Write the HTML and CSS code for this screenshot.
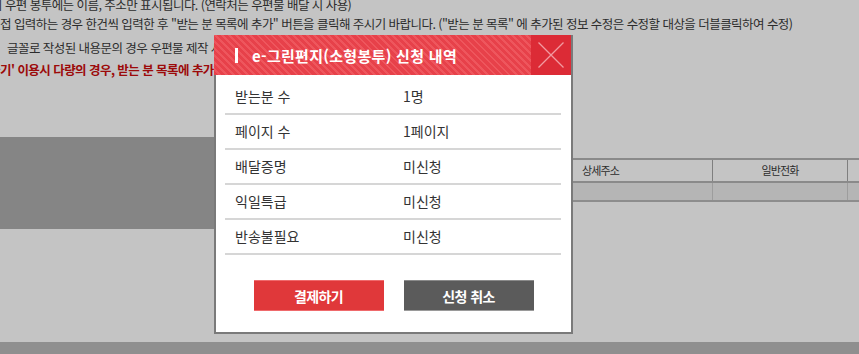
FILE: index.html
```html
<!DOCTYPE html>
<html lang="ko">
<head>
<meta charset="utf-8">
<title>e-그린편지 신청 내역</title>
<link rel="stylesheet" href="styles.css">
</head>
<body class="page">
  <div class="notes">
    <p class="note note-1">의 우편 봉투에는 이름, 주소만 표시됩니다. (연락처는 우편물 배달 시 사용)</p>
    <p class="note note-2">접 입력하는 경우 한건씩 입력한 후 "받는 분 목록에 추가" 버튼을 클릭해 주시기 바랍니다. ("받는 분 목록" 에 추가된 정보 수정은 수정할 대상을 더블클릭하여 수정)</p>
    <p class="note note-3">글꼴로 작성된 내용문의 경우 우편물 제작 시 글꼴이 변경될 수 있습니다.</p>
    <p class="note note-4">하기' 이용시 다량의 경우, 받는 분 목록에 추가하지 마시고 엑셀 파일로 업로드해 주시기 바랍니다.</p>
  </div>

  <div class="work-area">
    <div class="dark-block"></div>
    <div class="list-table">
      <div class="list-row list-head">
        <div class="col col-a"></div>
        <div class="col col-b">상세주소</div>
        <div class="col col-c">일반전화</div>
        <div class="col col-d"></div>
      </div>
      <div class="list-row list-data">
        <div class="col col-a"></div>
        <div class="col col-b"></div>
        <div class="col col-c"></div>
        <div class="col col-d"></div>
      </div>
    </div>
  </div>

  <div class="footer-band"></div>

  <div class="modal">
    <div class="modal-head">
      <span class="title-bar"></span>
      <h1 class="modal-title">e-그린편지(소형봉투) 신청 내역</h1>
      <button class="close-btn" aria-label="닫기">
        <svg width="40" height="40" viewBox="0 0 40 40">
          <path d="M7.5 7.5 L32.5 32.5 M32.5 7.5 L7.5 32.5" stroke="#f29aa0" stroke-width="1.3" fill="none"/>
        </svg>
      </button>
    </div>
    <div class="modal-body">
      <div class="info-table">
        <div class="info-row"><div class="cell">받는분 수</div><div class="cell">1명</div></div>
        <div class="info-row"><div class="cell">페이지 수</div><div class="cell">1페이지</div></div>
        <div class="info-row"><div class="cell">배달증명</div><div class="cell">미신청</div></div>
        <div class="info-row"><div class="cell">익일특급</div><div class="cell">미신청</div></div>
        <div class="info-row"><div class="cell">반송불필요</div><div class="cell">미신청</div></div>
      </div>
      <div class="actions">
        <button class="btn btn-pay">결제하기</button>
        <button class="btn btn-cancel">신청 취소</button>
      </div>
    </div>
  </div>
</body>
</html>
```

FILE: styles.css
```css
* { box-sizing: border-box; }

html, body { margin: 0; padding: 0; }

.page {
  position: relative;
  width: 859px;
  height: 354px;
  overflow: hidden;
  background: #c4c4c4;
  display: flex;
  flex-direction: column;
  font-family: "Noto Sans CJK KR", "Noto Sans", sans-serif;
}

.notes {
  height: 80px;
  display: flex;
  flex-direction: column;
}

.note {
  margin: 0;
  white-space: nowrap;
  font-size: 12.5px;
  letter-spacing: -0.55px;
  line-height: 20px;
  color: #2c2c2c;
}

.note-1 { margin-top: -5px; margin-left: -9px; }
.note-2 { margin-top: -1px; margin-left: 0; }
.note-3 { margin-top: 4px; padding-left: 7px; }
.note-4 {
  margin-top: 2px;
  margin-left: -11px;
  color: #9c0a0a;
  font-weight: 700;
}

.work-area {
  display: flex;
  margin-top: 57px;
}

.dark-block {
  width: 430px;
  height: 92px;
  background: #858585;
  flex: none;
}

.list-table {
  flex: 1;
  margin-top: 21px;
}

.list-row {
  display: flex;
}

.list-head {
  height: 25px;
  border-top: 2px solid #8a8a8a;
  border-bottom: 2px solid #8a8a8a;
}

.list-data {
  height: 19px;
  background: #b5b5b5;
  border-bottom: 2px solid #8d8d8d;
}

.col {
  font-size: 11px;
  letter-spacing: -0.9px;
  color: #2c2c2c;
  line-height: 21px;
}

.col-a { width: 142px; }
.col-b { width: 140px; padding-left: 10px; }
.col-c { width: 135px; text-align: center; border-left: 1px solid #7f7f7f; }
.col-d { flex: 1; border-left: 1px solid #7f7f7f; }

.list-data .col-c,
.list-data .col-d { border-left-color: #9d9d9d; }

.footer-band {
  margin-top: auto;
  height: 12px;
  background: #8f8f8f;
}

/* Modal overlay */
.modal {
  position: absolute;
  left: 214px;
  top: 35px;
  width: 359px;
  border-right: 2px solid #7a7a7a;
  border-bottom: 2px solid #7a7a7a;
  background: #fff;
}

.modal-head {
  height: 40px;
  display: flex;
  align-items: center;
  padding-left: 21px;
  background: repeating-linear-gradient(45deg, #e7414a 0 3px, #ee565d 3px 5px);
}

.title-bar {
  width: 3px;
  height: 15px;
  background: #fff;
  flex: none;
}

.modal-title {
  margin: 0 0 0 14px;
  flex: 1;
  font-size: 15px;
  font-weight: 700;
  color: #fff;
  letter-spacing: 0.3px;
  white-space: nowrap;
}

.close-btn {
  width: 40px;
  height: 40px;
  padding: 0;
  border: 0;
  background: #dc2b36;
  display: block;
  flex: none;
}

.close-btn svg { display: block; }

.modal-body {
  border-left: 2px solid #7a7a7a;
  padding: 5px 10px 21px 9px;
}

.info-row {
  display: grid;
  grid-template-columns: 1fr 1fr;
}

.cell {
  height: 35px;
  padding-left: 10px;
  border-bottom: 2px solid #d6d6d6;
  font-size: 14px;
  line-height: 33px;
  color: #333;
}

.actions {
  display: flex;
  justify-content: center;
  gap: 20px;
  margin-top: 25px;
  padding-left: 1px;
}

.btn {
  width: 130px;
  height: 31px;
  border: 0;
  padding: 0;
  font-family: "Noto Sans CJK KR", "Noto Sans", sans-serif;
  font-size: 14px;
  letter-spacing: -0.6px;
  font-weight: 700;
  color: #fff;
}

.btn-pay {
  background: #e0383a;
  border-top: 1px solid #ef6a6c;
  border-bottom: 1px solid #ef6a6c;
}

.btn-cancel {
  background: #5b5b5b;
  border-top: 1px solid #8a8a8a;
  border-bottom: 1px solid #9a9a9a;
}
```
